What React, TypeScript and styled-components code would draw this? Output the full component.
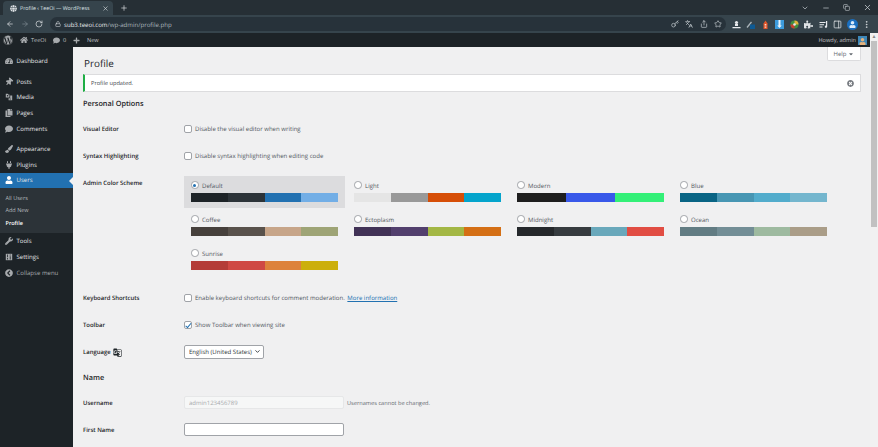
import React from 'react'
import styled, { createGlobalStyle } from 'styled-components'
import {
  ArrowLeft, ArrowRight, RotateCw, Lock, Key, Languages, Share, Star,
  PanelRight, EllipsisVertical, ChevronDown, Minus, X, Plus, Copy,
} from 'lucide-react'
import {
  FaWordpress, FaHome, FaComment, FaPlus, FaTachometerAlt, FaThumbtack, FaCopy,
  FaPaintBrush, FaPlug, FaUser, FaWrench, FaChevronCircleLeft, FaGlobe, FaTimesCircle,
  FaCaretDown, FaPuzzlePiece,
} from 'react-icons/fa'
import { MdGTranslate } from 'react-icons/md'

const GlobalStyle = createGlobalStyle`
  html, body {
    margin: 0;
    padding: 0;
    overflow: hidden;
    background: #f0f0f1;
    font-family: "Open Sans", "Liberation Sans", sans-serif;
    text-rendering: geometricPrecision;
  }
`

const Window = styled.div`
  width: 878px;
  height: 447px;
  display: flex;
  flex-direction: column;
  overflow: hidden;
`

/* browser chrome */
const TabStrip = styled.div`
  height: 15px;
  display: flex;
  align-items: flex-end;
  background: #262f35;
  color: #dfe3e6;
  padding-left: 3px;
`

const Tab = styled.div`
  width: 110px;
  height: 14px;
  box-sizing: border-box;
  padding: 0 4px 0 7px;
  display: flex;
  align-items: center;
  gap: 3px;
  background: #36444c;
  border-radius: 4px 4px 0 0;
  font-size: 5.3px;
  white-space: nowrap;
`

const TabTitle = styled.span`
  flex: 1;
`

const NewTab = styled.div`
  width: 21px;
  height: 14px;
  display: flex;
  align-items: center;
  justify-content: center;
`

const WindowControls = styled.div`
  margin-left: auto;
  height: 15px;
  display: flex;
  align-items: center;
  gap: 13px;
  padding-right: 6.5px;
  color: #c9d0d4;
`

const Toolbar = styled.div`
  height: 18px;
  box-sizing: border-box;
  display: flex;
  align-items: center;
  background: #36444c;
  color: #dfe3e6;
  padding: 0 4px 0 6px;
`

const NavIcons = styled.div`
  display: flex;
  gap: 6.5px;
  width: 44px;
`

const Omnibox = styled.div`
  width: 676px;
  height: 14px;
  box-sizing: border-box;
  padding: 0 4px 0 5px;
  display: flex;
  align-items: center;
  gap: 3px;
  border-radius: 7px;
  background: #27323a;
  font-size: 6.1px;
  color: #aab4ba;
`

const Url = styled.span`
  flex: 1;
  b {
    font-weight: 400;
    color: #e8eaed;
  }
`

const OmniIcons = styled.div`
  display: flex;
  gap: 6.5px;
  color: #c9d0d4;
`

const Extensions = styled.div`
  margin-left: 5.5px;
  display: flex;
  align-items: center;
  gap: 5.5px;
`

const Avatar = styled.span`
  width: 11px;
  height: 11px;
  margin: 0 -1px;
  border-radius: 50%;
  background: #1a6fc0;
  color: #dcecfa;
  display: flex;
  align-items: center;
  justify-content: center;
  overflow: hidden;
`

/* page */
const Viewport = styled.div`
  flex: 1;
  min-height: 0;
  display: flex;
`

const Page = styled.div`
  flex: 1;
  min-width: 0;
  display: flex;
  flex-direction: column;
`

const Scrollbar = styled.div`
  width: 8px;
  background: #f1f1f1;
  display: flex;
  flex-direction: column;
  align-items: center;
`

const ScrollArrow = styled.div`
  height: 8px;
  color: #8a8a8a;
  font-size: 5px;
  line-height: 8px;
`

const ScrollThumb = styled.div`
  width: 6px;
  height: 186px;
  background: #c1c1c1;
`

const AdminBar = styled.div`
  height: 14px;
  display: flex;
  align-items: center;
  background: #1d2327;
  color: #c3c4c7;
  font-size: 5.6px;
  padding: 0 3px;
`

const AdminItem = styled.div<{ $w: number; $gap?: number }>`
  width: ${(p) => p.$w}px;
  display: flex;
  align-items: center;
  gap: ${(p) => p.$gap ?? 3}px;
`

const Howdy = styled.div`
  margin-left: auto;
  display: flex;
  align-items: center;
  gap: 2px;
`

const UserPic = styled.span`
  width: 9px;
  height: 9px;
  background: #3d87b8;
  color: #e5b27c;
  display: flex;
  align-items: flex-end;
  justify-content: center;
  overflow: hidden;
`

const Body = styled.div`
  flex: 1;
  min-height: 0;
  display: flex;
`

const Sidebar = styled.nav`
  width: 73px;
  flex: none;
  box-sizing: border-box;
  padding-top: 6px;
  background: #1d2327;
  color: #f0f0f1;
`

const MenuItem = styled.div<{ $active?: boolean; $gap?: number; $dim?: boolean }>`
  position: relative;
  height: 15.8px;
  margin-top: ${(p) => p.$gap ?? 0}px;
  padding-left: 4.5px;
  display: flex;
  align-items: center;
  gap: 4px;
  font-size: 6.05px;
  color: ${(p) => (p.$dim ? '#a7aaad' : '#e4e6e7')};
  background: ${(p) => (p.$active ? '#2271b1' : 'transparent')};

  svg {
    width: 8px;
    height: 8px;
    flex: none;
    color: ${(p) => (p.$active ? '#fff' : '#a7aaad')};
  }

  ${(p) =>
    p.$active &&
    `&::after {
      content: '';
      position: absolute;
      right: 0;
      top: 4px;
      border: 4px solid transparent;
      border-right-color: #f0f0f1;
      border-left: 0;
    }`}
`

const TiltedPin = styled(FaThumbtack)`
  transform: rotate(40deg);
`

const SubMenu = styled.div`
  background: #2c3338;
  padding: 3.5px 0 4px;
`

const SubItem = styled.div<{ $current?: boolean }>`
  height: 12.5px;
  line-height: 12.5px;
  padding-left: 5.5px;
  font-size: 5.5px;
  color: ${(p) => (p.$current ? '#fff' : '#b4b9be')};
  font-weight: ${(p) => (p.$current ? 600 : 400)};
`

const Main = styled.main`
  flex: 1;
  min-width: 0;
  box-sizing: border-box;
  padding: 0 9px 0 10px;
  background: #f0f0f1;
  color: #3c434a;
  font-size: 6px;
`

const Header = styled.div`
  height: 27px;
  display: flex;
  justify-content: space-between;
`

const Title = styled.h1`
  margin: 8px 0 0 1px;
  font-size: 9.9px;
  line-height: 16px;
  font-weight: 400;
  color: #1d2327;
`

const HelpTab = styled.div`
  width: 34px;
  height: 14px;
  box-sizing: border-box;
  display: flex;
  align-items: center;
  justify-content: center;
  gap: 2px;
  background: #fff;
  border: 1px solid #dcdcde;
  border-top: 0;
  border-radius: 0 0 2px 2px;
  font-size: 6px;
  color: #646970;
`

const Notice = styled.div`
  height: 18px;
  box-sizing: border-box;
  display: flex;
  align-items: center;
  justify-content: space-between;
  padding: 0 6px;
  background: #fff;
  border: 1px solid #dcdcde;
  border-left: 2.5px solid #1fae45;
  font-size: 5.65px;
  color: #3c434a;

  svg {
    color: #787c82;
  }
`

const SectionTitle = styled.h2`
  margin: 0;
  height: 23.5px;
  line-height: 24px;
  font-size: 7.3px;
  font-weight: 600;
  color: #1d2327;
`

const Row = styled.div<{ $top?: boolean }>`
  min-height: 27px;
  display: grid;
  grid-template-columns: 101px 1fr;
  align-items: ${(p) => (p.$top ? 'start' : 'center')};
`

const RowLabel = styled.div<{ $top?: boolean }>`
  display: flex;
  align-items: center;
  gap: 2px;
  font-size: 5.95px;
  font-weight: 600;
  color: #1d2327;
  margin-top: ${(p) => (p.$top ? '9px' : '0')};
`

const Field = styled.label`
  display: flex;
  align-items: center;
  gap: 3.5px;
  font-size: 6.05px;
  color: #50575e;

  a {
    color: #2271b1;
    margin-left: 1px;
  }
`

const Check = styled.input.attrs({ type: 'checkbox' })`
  appearance: none;
  margin: 0;
  width: 7.5px;
  height: 7.5px;
  box-sizing: border-box;
  background: #fff;
  border: 1px solid #a0a3a8;
  border-radius: 2px;
  position: relative;

  &:checked::before {
    content: '';
    position: absolute;
    left: 1.6px;
    top: -0.4px;
    width: 2px;
    height: 4.6px;
    border: solid #2271b1;
    border-width: 0 1.2px 1.2px 0;
    transform: rotate(40deg);
  }
`

const Radio = styled.input.attrs({ type: 'radio' })`
  appearance: none;
  margin: -2px 0 0;
  width: 7.5px;
  height: 7.5px;
  box-sizing: border-box;
  background: #fff;
  border: 1px solid #a0a3a8;
  border-radius: 50%;
  position: relative;
  flex: none;

  &:checked::before {
    content: '';
    position: absolute;
    left: 1.25px;
    top: 1.25px;
    width: 3px;
    height: 3px;
    border-radius: 50%;
    background: #2271b1;
  }
`

const SchemeGrid = styled.div`
  display: grid;
  grid-template-columns: repeat(4, 163px);
  grid-auto-rows: 34px;
  padding: 6.5px 0;
`

const Scheme = styled.div<{ $selected?: boolean }>`
  width: 161px;
  height: 32px;
  box-sizing: border-box;
  padding: 4px 7px 0;
  background: ${(p) => (p.$selected ? '#dcdcde' : 'transparent')};
`

const SchemeName = styled.label`
  height: 12px;
  display: flex;
  align-items: center;
  gap: 3.5px;
  font-size: 6.05px;
  color: #50575e;
`

const Swatches = styled.div<{ $count: number }>`
  margin-top: 0.5px;
  height: 9.5px;
  display: grid;
  grid-template-columns: repeat(${(p) => p.$count}, 1fr);
`

const Swatch = styled.div<{ $color: string }>`
  background: ${(p) => p.$color};
`

const SelectWrap = styled.div`
  position: relative;
  width: 79.5px;
  color: #2c3338;

  svg {
    position: absolute;
    right: 2.5px;
    top: 3.2px;
  }
`

const LangSelect = styled.select`
  appearance: none;
  width: 100%;
  height: 13.5px;
  box-sizing: border-box;
  padding: 0 0 0 4px;
  background: #fff;
  border: 1px solid #a0a3a8;
  border-radius: 2px;
  font-family: inherit;
  font-size: 6.05px;
  color: #2c3338;
  text-rendering: geometricPrecision;
`

const TextInput = styled.input`
  width: 160px;
  height: 13.5px;
  box-sizing: border-box;
  padding: 0 4px;
  background: #fff;
  border: 1px solid #a0a3a8;
  border-radius: 2px;
  font-family: inherit;
  font-size: 6px;
  text-rendering: geometricPrecision;

  &:disabled {
    background: #f6f7f7;
    border-color: #e6e7e8;
    color: #a7aaad;
  }
`

const Inline = styled.div`
  display: flex;
  align-items: center;
  gap: 3px;
`

const Hint = styled.span`
  font-size: 5.65px;
  color: #646970;
`

const schemes = [
  { name: 'Default', colors: ['#1d2327', '#2c3338', '#2271b1', '#72aee6'] },
  { name: 'Light', colors: ['#e5e5e5', '#999999', '#d64e07', '#04a4cc'] },
  { name: 'Modern', colors: ['#1e1e1e', '#3858e9', '#33f078'] },
  { name: 'Blue', colors: ['#096484', '#4796b3', '#52accc', '#74b6ce'] },
  { name: 'Coffee', colors: ['#46403c', '#59524c', '#c7a589', '#9ea476'] },
  { name: 'Ectoplasm', colors: ['#413256', '#523f6d', '#a3b745', '#d46f15'] },
  { name: 'Midnight', colors: ['#25282b', '#363b3f', '#69a8bb', '#e14d43'] },
  { name: 'Ocean', colors: ['#627c83', '#738e96', '#9ebaa0', '#aa9d88'] },
  { name: 'Sunrise', colors: ['#b43c38', '#cf4944', '#dd823b', '#ccaf0b'] },
]

// dashicons media: camera with a note below
function MediaIcon() {
  return (
    <svg viewBox="0 0 20 20" fill="currentColor">
      <path d="M2 2h5l1 2h3v7H2z" />
      <circle cx="6.5" cy="7" r="2" fill="#1d2327" />
      <path d="M13 6h5v12h-9v-5h4z" />
      <circle cx="13" cy="15" r="1.5" fill="#1d2327" />
    </svg>
  )
}

// dashicons settings: square with two sliders
function SettingsIcon() {
  return (
    <svg viewBox="0 0 20 20" fill="currentColor">
      <path d="M2 2h16v16H2z" />
      <path d="M5 4h2v12H5zM12 4h2v12h-2z" fill="#1d2327" />
      <path d="M4 10h4v2H4zM11 6h4v2h-4z" />
    </svg>
  )
}

const menuTop = [
  { label: 'Dashboard', icon: <FaTachometerAlt />, gap: 0 },
  { label: 'Posts', icon: <TiltedPin />, gap: 5 },
  { label: 'Media', icon: <MediaIcon /> },
  { label: 'Pages', icon: <FaCopy /> },
  { label: 'Comments', icon: <FaComment /> },
  { label: 'Appearance', icon: <FaPaintBrush />, gap: 4 },
  { label: 'Plugins', icon: <FaPlug /> },
]

function TrayExt() {
  return (
    <svg width="9" height="9" viewBox="0 0 9 9" fill="#e8eaed">
      <circle cx="4.5" cy="2.5" r="1.6" />
      <path d="M3 4h3v2H3zM0.5 7h8v1.2h-8z" />
    </svg>
  )
}

function PenExt() {
  return (
    <svg width="9" height="9" viewBox="0 0 9 9">
      <path d="M0.5 7 L5 1.5 L6 2.5 L1.5 8z" fill="#aab4ba" />
      <path d="M4 4.5h5V9H4z" fill="#0e5a94" />
    </svg>
  )
}

function OrangeExt() {
  return (
    <svg width="9" height="9" viewBox="0 0 9 9">
      <path d="M2.5 9V3.5L4.5 0.5l2 3V9z" fill="#e2552a" />
      <path d="M3.7 4h1.6v1.4H3.7zM3.7 6.4h1.6v1.4H3.7z" fill="#f6d7c6" />
    </svg>
  )
}

function BlueExt() {
  return (
    <svg width="9" height="9" viewBox="0 0 9 9">
      <path d="M0 0h9v9H0z" fill="#3c9bdc" />
      <path d="M3.5 0h2v5.5h1.3L4.5 8 2.2 5.5h1.3z" fill="#e8f3fb" />
    </svg>
  )
}

function ColorExt() {
  return (
    <svg width="9" height="9" viewBox="0 0 9 9">
      <circle cx="4.5" cy="4.5" r="4" fill="#3f8f3f" />
      <path d="M4.5 0.5a4 4 0 0 1 4 4h-4z" fill="#e0b23a" />
      <path d="M0.5 4.5a4 4 0 0 0 4 4v-4z" fill="#c8402f" />
      <circle cx="4.5" cy="4.5" r="1.3" fill="#e8eaed" />
    </svg>
  )
}

function QueueExt() {
  return (
    <svg width="9" height="9" viewBox="0 0 9 9" fill="#e8eaed">
      <path d="M0.5 2h6v1h-6zM0.5 4.2h4.5v1H0.5zM0.5 6.4h3v1h-3z" />
      <path d="M7 1h1.2v5.5a1.2 1.2 0 1 1-1.2-1.1z" />
    </svg>
  )
}

function BrowserChrome() {
  return (
    <>
      <TabStrip>
        <Tab>
          <FaGlobe size={7} />
          <TabTitle>Profile ‹ TeeOi — WordPress</TabTitle>
          <X size={7} />
        </Tab>
        <NewTab>
          <Plus size={8} />
        </NewTab>
        <WindowControls>
          <ChevronDown size={8} />
          <Minus size={8} />
          <Copy size={7} />
          <X size={9} />
        </WindowControls>
      </TabStrip>
      <Toolbar>
        <NavIcons>
          <ArrowLeft size={8} />
          <ArrowRight size={8} color="#7f8c94" />
          <RotateCw size={8} />
        </NavIcons>
        <Omnibox>
          <Lock size={6} color="#dfe3e6" />
          <Url>
            <b>sub3.teeoi.com</b>/wp-admin/profile.php
          </Url>
          <OmniIcons>
            <Key size={8} />
            <Languages size={8} />
            <Share size={8} />
            <Star size={8} />
          </OmniIcons>
        </Omnibox>
        <Extensions>
          <TrayExt />
          <PenExt />
          <OrangeExt />
          <BlueExt />
          <ColorExt />
          <FaPuzzlePiece size={9} />
          <QueueExt />
          <PanelRight size={9} />
          <Avatar>
            <FaUser size={7} />
          </Avatar>
          <EllipsisVertical size={9} />
        </Extensions>
      </Toolbar>
    </>
  )
}

function WpAdminBar() {
  return (
    <AdminBar>
      <AdminItem $w={17}>
        <FaWordpress size={10} color="#a7aaad" />
      </AdminItem>
      <AdminItem $w={33}>
        <FaHome size={8} color="#a7aaad" />
        TeeOi
      </AdminItem>
      <AdminItem $w={20}>
        <FaComment size={7} color="#a7aaad" />
        <span>0</span>
      </AdminItem>
      <AdminItem $w={30} $gap={7}>
        <FaPlus size={7} color="#a7aaad" />
        <span>New</span>
      </AdminItem>
      <Howdy>
        Howdy, admin
        <UserPic>
          <FaUser size={7} />
        </UserPic>
      </Howdy>
    </AdminBar>
  )
}

function SideMenu() {
  return (
    <Sidebar>
      {menuTop.map((m) => (
        <MenuItem key={m.label} $gap={m.gap}>
          {m.icon}
          {m.label}
        </MenuItem>
      ))}
      <MenuItem $active>
        <FaUser />
        Users
      </MenuItem>
      <SubMenu>
        <SubItem>All Users</SubItem>
        <SubItem>Add New</SubItem>
        <SubItem $current>Profile</SubItem>
      </SubMenu>
      <MenuItem>
        <FaWrench />
        Tools
      </MenuItem>
      <MenuItem>
        <SettingsIcon />
        Settings
      </MenuItem>
      <MenuItem $dim>
        <FaChevronCircleLeft />
        Collapse menu
      </MenuItem>
    </Sidebar>
  )
}

function ProfileForm() {
  return (
    <Main>
      <Header>
        <Title>Profile</Title>
        <HelpTab>
          Help <FaCaretDown size={6} />
        </HelpTab>
      </Header>
      <Notice>
        Profile updated.
        <FaTimesCircle size={7} />
      </Notice>

      <SectionTitle>Personal Options</SectionTitle>
      <Row>
        <RowLabel>Visual Editor</RowLabel>
        <Field>
          <Check />
          Disable the visual editor when writing
        </Field>
      </Row>
      <Row>
        <RowLabel>Syntax Highlighting</RowLabel>
        <Field>
          <Check />
          Disable syntax highlighting when editing code
        </Field>
      </Row>
      <Row $top>
        <RowLabel $top>Admin Color Scheme</RowLabel>
        <SchemeGrid>
          {schemes.map((s, i) => (
            <Scheme key={s.name} $selected={i === 0}>
              <SchemeName>
                <Radio name="scheme" defaultChecked={i === 0} />
                {s.name}
              </SchemeName>
              <Swatches $count={s.colors.length}>
                {s.colors.map((c) => (
                  <Swatch key={c} $color={c} />
                ))}
              </Swatches>
            </Scheme>
          ))}
        </SchemeGrid>
      </Row>
      <Row>
        <RowLabel>Keyboard Shortcuts</RowLabel>
        <Field>
          <Check />
          <span>
            Enable keyboard shortcuts for comment moderation. <a href="#more">More information</a>
          </span>
        </Field>
      </Row>
      <Row>
        <RowLabel>Toolbar</RowLabel>
        <Field>
          <Check defaultChecked />
          Show Toolbar when viewing site
        </Field>
      </Row>
      <Row>
        <RowLabel>
          Language <MdGTranslate size={9} color="#1d2327" />
        </RowLabel>
        <SelectWrap>
          <LangSelect defaultValue="en">
            <option value="en">English (United States)</option>
          </LangSelect>
          <ChevronDown size={7} strokeWidth={3} />
        </SelectWrap>
      </Row>

      <SectionTitle>Name</SectionTitle>
      <Row>
        <RowLabel>Username</RowLabel>
        <Inline>
          <TextInput disabled defaultValue="admin123456789" />
          <Hint>Usernames cannot be changed.</Hint>
        </Inline>
      </Row>
      <Row>
        <RowLabel>First Name</RowLabel>
        <Inline>
          <TextInput />
        </Inline>
      </Row>
    </Main>
  )
}

export default function App() {
  return (
    <Window>
      <GlobalStyle />
      <BrowserChrome />
      <Viewport>
        <Page>
          <WpAdminBar />
          <Body>
            <SideMenu />
            <ProfileForm />
          </Body>
        </Page>
        <Scrollbar>
          <ScrollArrow>▲</ScrollArrow>
          <ScrollThumb />
        </Scrollbar>
      </Viewport>
    </Window>
  )
}
